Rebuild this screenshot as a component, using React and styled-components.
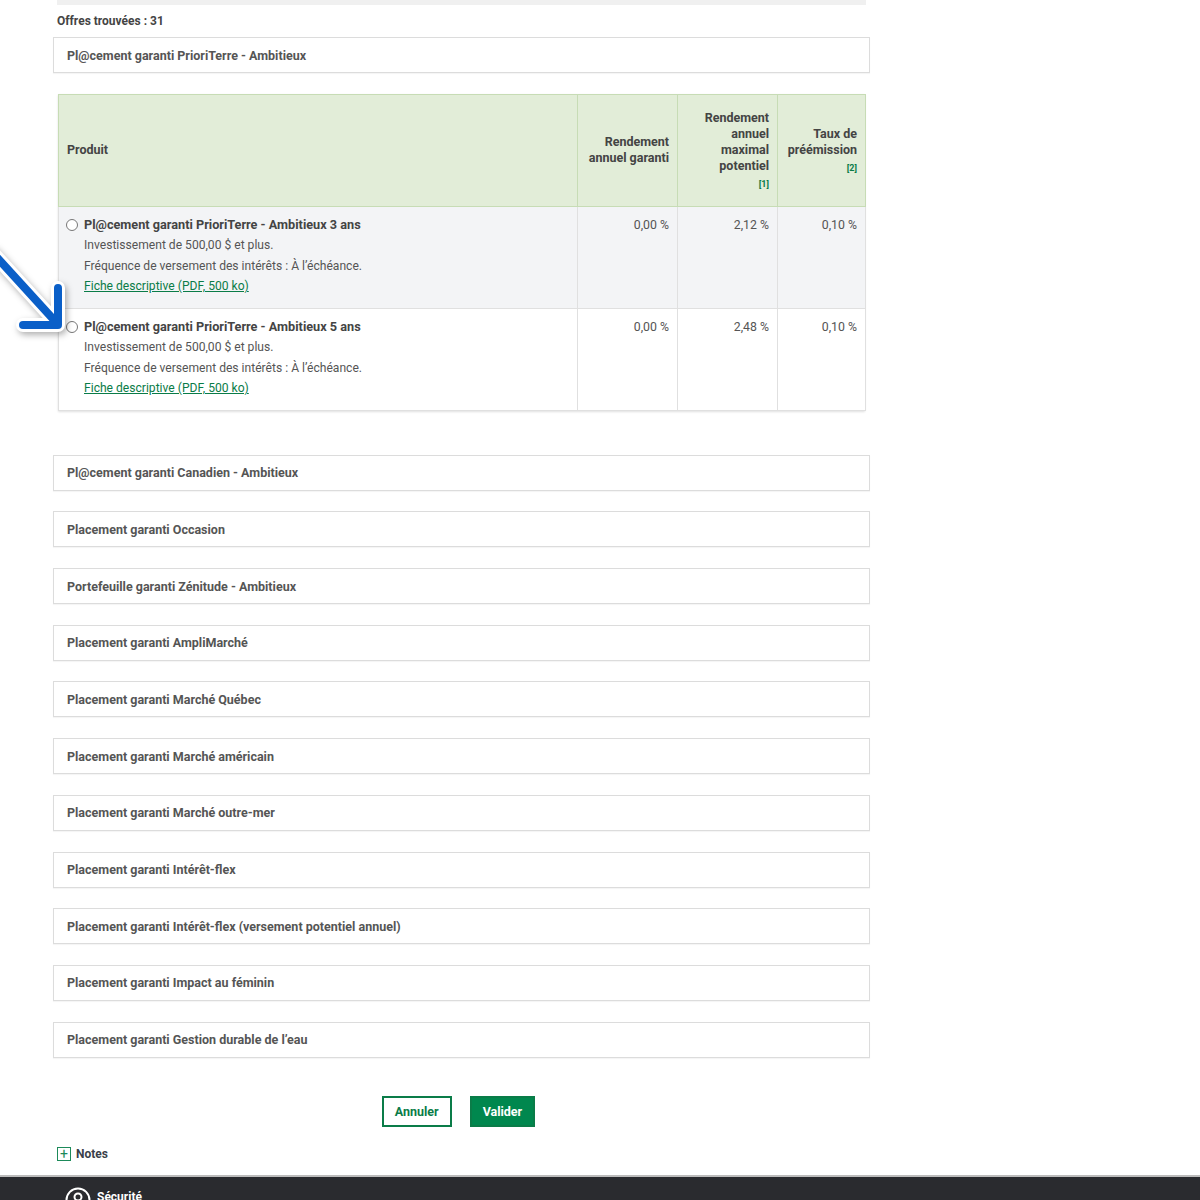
import React from 'react';
import styled, { createGlobalStyle } from 'styled-components';

const GlobalStyle = createGlobalStyle`
  html, body {
    margin: 0;
    padding: 0;
    background: #fff;
    font-family: Roboto, "Liberation Sans", Arial, sans-serif;
    color: #444;
  }
`;

const Page = styled.div`
  position: relative;
  height: 1200px;
  overflow: hidden;
`;

const Content = styled.main`
  width: 817px;
  margin-left: 53px;
  display: flex;
  flex-direction: column;
`;

const TopBar = styled.div`
  margin: 0 4px;
  height: 5px;
  background: #f0f0f0;
`;

const Count = styled.p`
  margin: 9px 0 9px 4px;
  font-size: 12px;
  font-weight: 700;
  color: #444;
  line-height: 14px;
`;

const Offer = styled.div`
  box-sizing: border-box;
  height: 36px;
  border: 1px solid #dcdcdc;
  box-shadow: 0 1px 1px rgba(0, 0, 0, 0.04);
  display: flex;
  align-items: center;
  padding-left: 13px;
  font-size: 12.5px;
  font-weight: 700;
  color: #555;
  margin-bottom: 20.7px;
`;

const TableWrap = styled.div`
  margin: 0 5px 44px 5px;
  box-shadow: 0 1px 2px rgba(0, 0, 0, 0.12);
`;

const Table = styled.table`
  width: 100%;
  border-collapse: collapse;
  table-layout: fixed;
  border: 1px solid #dcdcdc;
`;

const Th = styled.th`
  background: #e2edd8;
  border: 1px solid #c7dcb5;
  height: 112px;
  box-sizing: border-box;
  padding: 0 8px;
  font-size: 12.5px;
  line-height: 16px;
  font-weight: 700;
  color: #444;
  vertical-align: middle;
  text-align: ${(p) => (p.$left ? 'left' : 'right')};
  width: ${(p) => p.$w}px;
`;

const Note = styled.a`
  display: block;
  margin-top: 4px;
  font-size: 9px;
  line-height: 12px;
  color: #0a7c48;
  text-decoration: none;
`;

const Row = styled.tr`
  background: ${(p) => (p.$alt ? '#f3f4f6' : '#fff')};
`;

const Td = styled.td`
  border: 1px solid #e0e0e0;
  height: 102px;
  box-sizing: border-box;
  padding: 8px 8px 0 7px;
  vertical-align: top;
  font-size: 12.3px;
  line-height: 20.5px;
  color: #555;
  text-align: ${(p) => (p.$left ? 'left' : 'right')};
`;

const ProductLine = styled.label`
  display: flex;
  align-items: center;
  gap: 6px;
  font-size: 12.7px;
  font-weight: 700;
  color: #444;
`;

const Radio = styled.span`
  box-sizing: border-box;
  width: 12px;
  height: 12px;
  border-radius: 50%;
  border: 1px solid #777;
  background: #fff;
  flex: none;
`;

const Detail = styled.div`
  padding-left: 18px;
  font-size: 12.1px;
`;

const DocLink = styled.a`
  color: #0a7c48;
  text-decoration: underline;
  cursor: pointer;
`;

const Actions = styled.div`
  display: flex;
  justify-content: center;
  gap: 18px;
  margin: 18px 0 0 -6px;
`;

const Button = styled.button`
  box-sizing: border-box;
  height: 31px;
  padding: 0 11px;
  font-family: inherit;
  font-size: 12.5px;
  font-weight: 700;
  border: 2px solid #0a7c48;
  background: ${(p) => (p.$primary ? '#00874e' : '#fff')};
  color: ${(p) => (p.$primary ? '#fff' : '#0a7c48')};
  cursor: pointer;
`;

const NotesToggle = styled.div`
  display: flex;
  align-items: center;
  gap: 5px;
  margin: 20px 0 14px 4px;
  font-size: 12px;
  font-weight: 700;
  color: #3a3f4a;
`;

const PlusBox = styled.span`
  box-sizing: border-box;
  width: 14px;
  height: 14px;
  border: 1px solid #1d8a5a;
  display: flex;
  align-items: center;
  justify-content: center;
  color: #1d8a5a;
  font-size: 14px;
  line-height: 1;
  font-weight: 400;
`;

const Footer = styled.footer`
  background: #2a2b2f;
  border-top: 2px solid #bcbcbc;
  height: 60px;
  padding: 10px 0 0 65px;
  display: flex;
  align-items: flex-start;
  gap: 6px;
  color: #fff;
  font-size: 12px;
  font-weight: 700;
`;

const FooterLabel = styled.span`
  margin-top: 3px;
`;

const Arrow = styled.svg`
  position: absolute;
  left: 0;
  top: 244px;
  overflow: visible;
  filter: drop-shadow(2px 3px 3px rgba(0, 0, 0, 0.3));
`;

const offers = [
  'Pl@cement garanti Canadien - Ambitieux',
  'Placement garanti Occasion',
  'Portefeuille garanti Zénitude - Ambitieux',
  'Placement garanti AmpliMarché',
  'Placement garanti Marché Québec',
  'Placement garanti Marché américain',
  'Placement garanti Marché outre-mer',
  'Placement garanti Intérêt-flex',
  'Placement garanti Intérêt-flex (versement potentiel annuel)',
  'Placement garanti Impact au féminin',
  'Placement garanti Gestion durable de l’eau',
];

const products = [
  { term: 3, garanti: '0,00 %', max: '2,12 %', taux: '0,10 %' },
  { term: 5, garanti: '0,00 %', max: '2,48 %', taux: '0,10 %' },
];

const App = () => {
  return (
    <Page>
      <GlobalStyle />
      <Content>
        <TopBar />
        <Count>Offres trouvées : 31</Count>
        <Offer>Pl@cement garanti PrioriTerre - Ambitieux</Offer>

        <TableWrap>
          <Table>
            <thead>
              <tr>
                <Th $left $w={519}>Produit</Th>
                <Th $w={100}>Rendement annuel garanti</Th>
                <Th $w={100}>
                  Rendement annuel maximal potentiel
                  <Note>[1]</Note>
                </Th>
                <Th $w={88}>
                  Taux de préémission
                  <Note>[2]</Note>
                </Th>
              </tr>
            </thead>
            <tbody>
              {products.map((p, i) => (
                <Row key={p.term} $alt={i === 0}>
                  <Td $left>
                    <ProductLine>
                      <Radio />
                      Pl@cement garanti PrioriTerre - Ambitieux {p.term} ans
                    </ProductLine>
                    <Detail>
                      Investissement de 500,00 $ et plus.
                      <br />
                      Fréquence de versement des intérêts : À l’échéance.
                      <br />
                      <DocLink>Fiche descriptive (PDF, 500 ko)</DocLink>
                    </Detail>
                  </Td>
                  <Td>{p.garanti}</Td>
                  <Td>{p.max}</Td>
                  <Td>{p.taux}</Td>
                </Row>
              ))}
            </tbody>
          </Table>
        </TableWrap>

        {offers.map((o) => (
          <Offer key={o}>{o}</Offer>
        ))}

        <Actions>
          <Button>Annuler</Button>
          <Button $primary>Valider</Button>
        </Actions>

        <NotesToggle>
          <PlusBox>+</PlusBox>
          Notes
        </NotesToggle>
      </Content>

      <Footer>
        <svg width="26" height="26" viewBox="0 0 26 26">
          <circle cx="13" cy="13" r="11.5" fill="none" stroke="#fff" strokeWidth="2" />
          <circle cx="13" cy="10" r="3.5" fill="none" stroke="#fff" strokeWidth="2" />
          <path d="M13 13.5v5" stroke="#fff" strokeWidth="2" />
        </svg>
        <FooterLabel>Sécurité</FooterLabel>
      </Footer>

      <Arrow width="100" height="100" viewBox="0 0 100 100">
        <g fill="none" strokeLinecap="round" strokeLinejoin="round">
          <path d="M-8 8 L54 76 M58 44 L58 81 L23 81" stroke="#fff" strokeWidth="14" />
          <path d="M-8 8 L54 76 M58 44 L58 81 L23 81" stroke="#0a5fc8" strokeWidth="8" />
        </g>
      </Arrow>
    </Page>
  );
};

export default App;
